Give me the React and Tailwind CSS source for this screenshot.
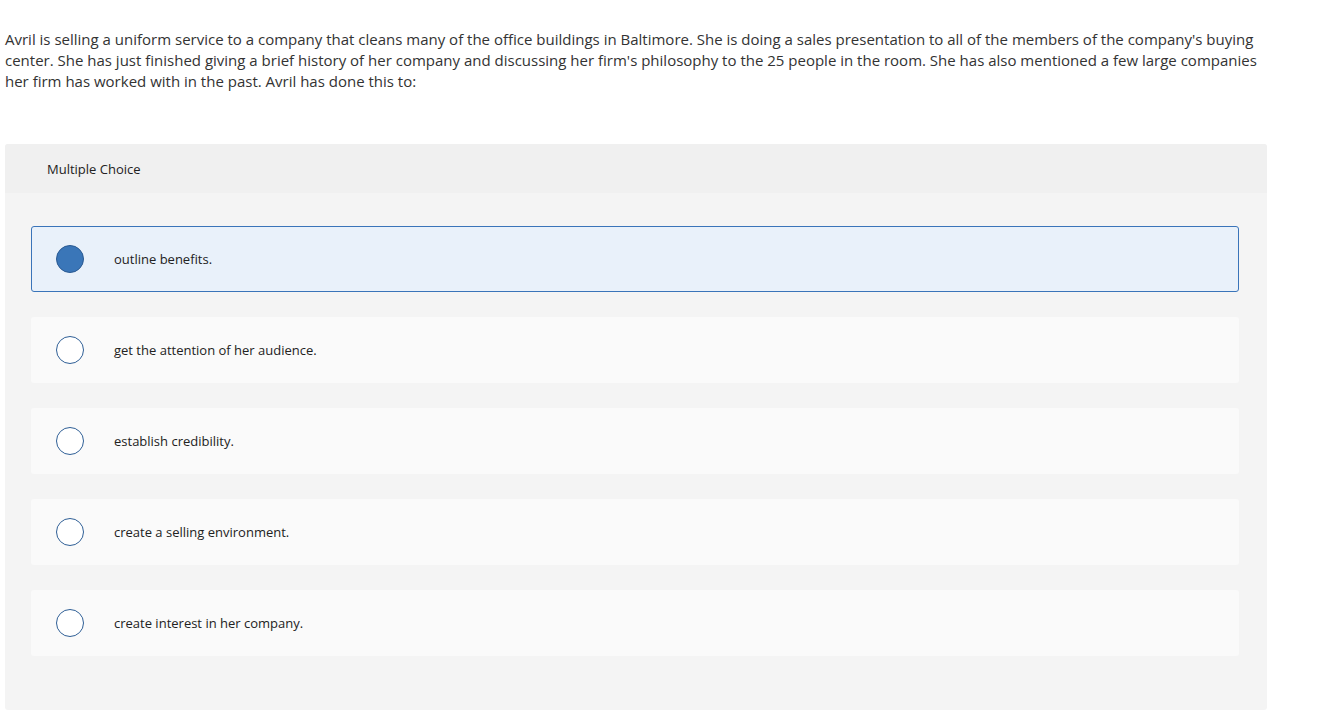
const options = [
  "outline benefits.",
  "get the attention of her audience.",
  "establish credibility.",
  "create a selling environment.",
  "create interest in her company.",
]

export default function App() {
  const selected = 0
  return (
    <div className="min-h-screen bg-white text-[#333]" style={{ fontFamily: "'Open Sans', sans-serif" }}>
      <div className="pl-[5px] pr-[70px] pt-[29px] text-[15px] leading-[21px] text-[#333]">
        Avril is selling a uniform service to a company that cleans many of the office buildings in Baltimore. She is doing a sales presentation to all of the members of the company's buying center. She has just finished giving a brief history of her company and discussing her firm's philosophy to the 25 people in the room. She has also mentioned a few large companies her firm has worked with in the past. Avril has done this to:
      </div>

      <div className="ml-[5px] mt-[52px] w-[1262px] rounded-[3px] bg-[#f4f4f4] overflow-hidden">
        <div className="h-[49px] bg-[#f0f0f0] pl-[42px] pt-[2px] flex items-center text-[13px] text-[#222]">
          Multiple Choice
        </div>
        <div className="pl-[26px] pr-[28px] pt-[33px] pb-[54px] flex flex-col gap-[25px]">
          {options.map((o, i) => (
            <div
              key={o}
              className={`h-[66px] rounded-[3px] flex items-center ${
                i === selected ? "bg-[#e9f1fa] border border-[#3a74b9]" : "bg-[#fafafa] border border-transparent"
              }`}
            >
              <div className="w-[76px] flex justify-center">
                {i === selected ? (
                  <span className="w-[28px] h-[28px] rounded-full bg-[#3a76b8] border-[1.5px] border-[#2a5a92]" />
                ) : (
                  <span className="w-[28px] h-[28px] rounded-full bg-white border-[1.5px] border-[#2f5f96]" />
                )}
              </div>
              <span className="ml-[6px] pt-[2px] text-[13px] text-[#222]">{o}</span>
            </div>
          ))}
        </div>
      </div>
    </div>
  )
}
